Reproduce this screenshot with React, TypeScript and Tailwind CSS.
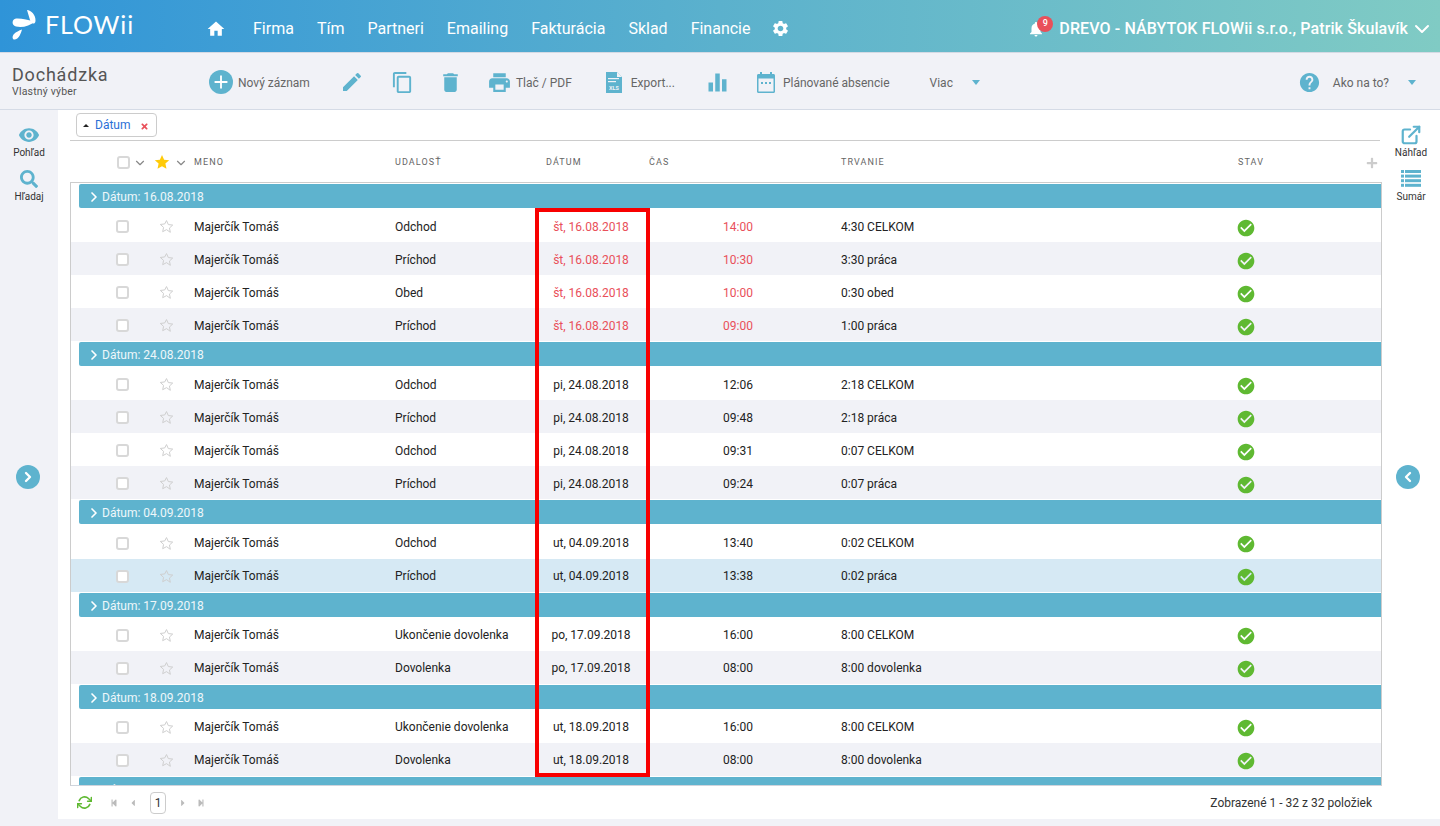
import React from "react";
import { FaStepBackward, FaStepForward, FaCaretLeft, FaCaretRight, FaSearch, FaPlus, FaTimes } from "react-icons/fa";
import {
  MdHome, MdSettings, MdNotifications, MdEdit, MdContentCopy, MdDelete, MdPrint,
  MdEqualizer, MdHelp, MdVisibility, MdCheckCircle, MdAdd,
} from "react-icons/md";
import { FiChevronDown, FiChevronLeft, FiChevronRight, FiExternalLink, FiRefreshCw } from "react-icons/fi";

type Row = { event: string; date: string; time: string; dur: string };
type Group = { title: string; red?: boolean; rows: Row[] };

const groups: Group[] = [
  {
    title: "16.08.2018",
    red: true,
    rows: [
      { event: "Odchod", date: "št, 16.08.2018", time: "14:00", dur: "4:30 CELKOM" },
      { event: "Príchod", date: "št, 16.08.2018", time: "10:30", dur: "3:30 práca" },
      { event: "Obed", date: "št, 16.08.2018", time: "10:00", dur: "0:30 obed" },
      { event: "Príchod", date: "št, 16.08.2018", time: "09:00", dur: "1:00 práca" },
    ],
  },
  {
    title: "24.08.2018",
    rows: [
      { event: "Odchod", date: "pi, 24.08.2018", time: "12:06", dur: "2:18 CELKOM" },
      { event: "Príchod", date: "pi, 24.08.2018", time: "09:48", dur: "2:18 práca" },
      { event: "Odchod", date: "pi, 24.08.2018", time: "09:31", dur: "0:07 CELKOM" },
      { event: "Príchod", date: "pi, 24.08.2018", time: "09:24", dur: "0:07 práca" },
    ],
  },
  {
    title: "04.09.2018",
    rows: [
      { event: "Odchod", date: "ut, 04.09.2018", time: "13:40", dur: "0:02 CELKOM" },
      { event: "Príchod", date: "ut, 04.09.2018", time: "13:38", dur: "0:02 práca" },
    ],
  },
  {
    title: "17.09.2018",
    rows: [
      { event: "Ukončenie dovolenka", date: "po, 17.09.2018", time: "16:00", dur: "8:00 CELKOM" },
      { event: "Dovolenka", date: "po, 17.09.2018", time: "08:00", dur: "8:00 dovolenka" },
    ],
  },
  {
    title: "18.09.2018",
    rows: [
      { event: "Ukončenie dovolenka", date: "ut, 18.09.2018", time: "16:00", dur: "8:00 CELKOM" },
      { event: "Dovolenka", date: "ut, 18.09.2018", time: "08:00", dur: "8:00 dovolenka" },
    ],
  },
  { title: "19.09.2018", rows: [] },
];

const nav = ["Firma", "Tím", "Partneri", "Emailing", "Fakturácia", "Sklad", "Financie"];

function Logo() {
  return (
    <div className="-mt-[5px] flex w-[206px] shrink-0 items-center">
      <svg width="36" height="52" viewBox="0 0 36 52" className="text-white">
        <g fill="currentColor">
          <path d="M27 10C31 10 36 15 35.5 21C35 25 31 24 30 20C29 17 28 13 27 10Z" />
          <path d="M35 21.5C30 26 22 28 16 26.5C11 25 12 19 16 18.500C21 18 28 20 35 21.500Z" />
          <path d="M22 29.500C21 33 19 39 15 39.500C12 40 12 36 14 34C16 32 19 30.500 22 29.500Z" />
        </g>
      </svg>
      <span className="-mt-[3px] ml-[9px] font-['Lato',sans-serif] text-[25px] font-normal leading-none tracking-[0.9px] text-white">FLOWii</span>
    </div>
  );
}

function Header() {
  return (
    <header className="flex h-[53px] shrink-0 items-center border-b border-[#d5dae4] bg-gradient-to-r from-[#2f94d8] via-[#5bb1cd] to-[#80cbc4] pr-[6px] pt-[5px] text-white">
      <Logo />
      <MdHome className="text-[20px]" />
      <nav className="ml-[27px] flex gap-[23px] text-[16px]">
        {nav.map((n) => (
          <span key={n}>{n}</span>
        ))}
      </nav>
      <MdSettings className="ml-[21px] text-[19px]" />
      <div className="relative ml-auto">
        <MdNotifications className="text-[18px]" />
        <span className="absolute -right-[8px] -top-[4px] flex h-[16px] w-[16px] items-center justify-center rounded-full bg-[#e9505a] text-[9px] font-medium">9</span>
      </div>
      <span className="ml-[14px] text-[16px] font-medium tracking-[0.11px]">DREVO - NÁBYTOK FLOWii s.r.o., Patrik Škulavík</span>
      <FiChevronDown className="ml-[2px] text-[24px]" strokeWidth={2} />
    </header>
  );
}

function Caret() {
  return <span className="block h-0 w-0 border-x-[4px] border-t-[5px] border-x-transparent border-t-[#5eb3ce]" />;
}

function XlsIcon() {
  return (
    <svg width="16" height="21" viewBox="0 0 16 21" className="block">
      <path d="M0 0H11L16 5V21H0Z" fill="#5eb3ce" />
      <path d="M11 0L16 5H11Z" fill="#f1f2f7" />
      <rect x="2" y="6" width="11" height="1.2" fill="#f1f2f7" />
      <rect x="2" y="9" width="8" height="1.2" fill="#f1f2f7" />
      <text x="8" y="18" textAnchor="middle" fontSize="5.5" fontWeight="700" fill="#f1f2f7" fontFamily="Roboto, sans-serif">XLS</text>
    </svg>
  );
}

function CalendarIcon() {
  return (
    <svg width="18" height="21" viewBox="0 0 18 21" fill="#5eb3ce" className="block">
      <path d="M3 0H5V2H13V0H15V2H16.500C17.400 2 18 2.600 18 3.500V19.500C18 20.400 17.400 21 16.500 21H1.500C.6 21 0 20.400 0 19.500V3.500C0 2.600.6 2 1.500 2H3Z" />
      <rect x="1.5" y="6.5" width="15" height="13" fill="#f1f2f7" />
      <rect x="4" y="10" width="2" height="2" />
      <rect x="8" y="10" width="2" height="2" />
      <rect x="12" y="10" width="2" height="2" />
    </svg>
  );
}

function ListIcon() {
  return (
    <svg width="20" height="17" viewBox="0 0 20 17" fill="#5eb3ce" className="block">
      <rect x="0" y="0" width="3" height="3" />
      <rect x="4" y="0" width="16" height="3" />
      <rect x="0" y="4.600" width="3" height="3" />
      <rect x="4" y="4.600" width="16" height="3" />
      <rect x="0" y="9.200" width="3" height="3" />
      <rect x="4" y="9.200" width="16" height="3" />
      <rect x="0" y="13.800" width="3" height="3" />
      <rect x="4" y="13.800" width="16" height="3" />
    </svg>
  );
}

function Toolbar() {
  const label = "pt-[2px] text-[12px] text-[#666]";
  return (
    <div className="flex h-[57px] shrink-0 items-center border-b border-[#d5dbe6] pl-[12px] pr-[24px] pt-[2px]">
      <div className="-mt-[2px] w-[197px]">
        <div className="text-[18px] leading-[20px] tracking-[0.8px] text-[#555]">Dochádzka</div>
        <div className="text-[10.500px] leading-[13px] tracking-[0.2px] text-[#555]">Vlastný výber</div>
      </div>
      <span className="flex h-[24px] w-[24px] items-center justify-center rounded-full bg-[#5eb3ce] text-white">
        <MdAdd className="text-[22px]" />
      </span>
      <span className={`ml-[5px] ${label}`}>Nový záznam</span>
      <MdEdit className="ml-[30px] text-[24px] text-[#5eb3ce]" />
      <MdContentCopy className="ml-[27px] text-[23px] text-[#5eb3ce]" />
      <MdDelete className="ml-[24px] text-[25px] text-[#5eb3ce]" />
      <MdPrint className="ml-[24px] text-[25px] text-[#5eb3ce]" />
      <span className={`ml-[4px] ${label}`}>Tlač / PDF</span>
      <span className="ml-[34px]"><XlsIcon /></span>
      <span className={`ml-[9px] ${label}`}>Export...</span>
      <MdEqualizer className="ml-[29px] text-[27px] text-[#5eb3ce]" />
      <span className="ml-[26px]"><CalendarIcon /></span>
      <span className={`ml-[8px] ${label}`}>Plánované absencie</span>
      <span className={`ml-[40px] ${label}`}>Viac</span>
      <span className="ml-[19px]"><Caret /></span>
      <MdHelp className="ml-auto text-[23px] text-[#5eb3ce]" />
      <span className={`ml-[12px] ${label}`}>Ako na to?</span>
      <span className="ml-[19px]"><Caret /></span>
    </div>
  );
}

function SideBtn({ icon, label }: { icon: React.ReactNode; label: string }) {
  return (
    <div className="flex flex-col items-center text-[10px] leading-[12px] text-[#333]">
      <span className="flex h-[25px] items-center justify-center text-[#5eb3ce]">{icon}</span>
      <span>{label}</span>
    </div>
  );
}

function RoundArrow({ left }: { left?: boolean }) {
  return (
    <span className="flex h-[24px] w-[24px] items-center justify-center rounded-full bg-[#5eb3ce] text-white">
      {left ? <FiChevronLeft className="text-[16px]" strokeWidth={3.5} /> : <FiChevronRight className="text-[16px]" strokeWidth={3.5} />}
    </span>
  );
}

function Checkbox() {
  return <span className="block h-[13px] w-[13px] rounded-[3px] border-2 border-[#d8d8d8] bg-white" />;
}

function Star() {
  return (
    <svg width="15" height="15" viewBox="0 0 24 24" fill="none" stroke="#cfcfcf" strokeWidth="1.6" strokeLinejoin="round" className="block">
      <path d="M12 2.500l2.900 6.400 7 .8-5.200 4.700 1.400 6.900L12 17l-6.100 3.300 1.400-6.900-5.200-4.700 7-.8z" />
    </svg>
  );
}

const rowGrid = "grid grid-cols-[123px_201px_141px_110px_195px_397px_1fr] items-center";

function DataRow({ row, even, red, selected }: { row: Row; even: boolean; red?: boolean; selected?: boolean }) {
  const bg = selected ? "bg-[#d6e9f4]" : even ? "bg-[#f1f2f7]" : "bg-white";
  const dateColor = red ? "text-[#e9505a]" : "text-[#222]";
  return (
    <div className={`${rowGrid} h-[33px] pt-[2px] text-[12px] text-[#222] ${bg}`}>
      <div className="flex items-center pl-[45px]">
        <Checkbox />
        <span className="ml-[30px]"><Star /></span>
      </div>
      <span>Majerčík Tomáš</span>
      <span>{row.event}</span>
      <span className={`text-center ${dateColor}`}>{row.date}</span>
      <span className={`pl-[77px] ${dateColor}`}>{row.time}</span>
      <span>{row.dur}</span>
      <MdCheckCircle className="-ml-[2px] mt-[2px] text-[20px] text-[#5fb932]" />
    </div>
  );
}

function Grid() {
  return (
    <div className="relative h-[604px] overflow-hidden border border-[#ccc] border-b-[#cfd4dc] bg-white">
      {groups.map((g) => (
        <div key={g.title}>
          <div className="my-[1.1px] ml-[8px] flex h-[24px] items-center rounded-l-[2px] bg-[#5eb3ce] pl-[7px] pt-[2px] text-[12px] text-white/90">
            <FiChevronRight className="text-[16px] text-white" strokeWidth={2.5} />
            Dátum: {g.title}
          </div>
          {g.rows.map((r, i) => (
            <DataRow key={r.time + i} row={r} even={i % 2 === 1} red={g.red} selected={g.title === "04.09.2018" && i === 1} />
          ))}
        </div>
      ))}
      <div className="absolute left-[464px] top-[25px] h-[569px] w-[115px] border-4 border-[#f80000]" />
    </div>
  );
}

function Main() {
  const head = "text-[9px] uppercase tracking-[1.1px] text-[#666]";
  return (
    <div className="flex min-w-0 flex-1 flex-col bg-white pl-[12px]">
      <div className="mr-[2px] h-[31px] border-b border-[#ccc] pl-[6px] pt-[3px]">
        <div className="flex h-[24px] w-[81px] items-center rounded-[4px] border border-[#ccc] pl-[6px] text-[12px] text-[#2a6fd6]">
          <span className="mr-[6px] h-0 w-0 border-x-[3px] border-b-[3px] border-x-transparent border-b-[#222]" />
          <span>Dátum</span>
          <FaTimes className="ml-[10px] mt-[2px] text-[9px] text-[#e9505a]" />
        </div>
      </div>
      <div className="flex h-[41px] items-center pl-[47px] pt-[2px]">
        <Checkbox />
        <FiChevronDown className="ml-[3px] text-[14px] text-[#888]" />
        <svg width="16" height="16" viewBox="0 0 24 24" fill="#ffcb0a" className="-mt-[2px] ml-[7px]">
          <path d="M12 1.500l3.200 7 7.600.8-5.700 5.100 1.600 7.600L12 18.200 5.300 22l1.600-7.600L1.200 9.300l7.600-.8z" />
        </svg>
        <FiChevronDown className="ml-[4px] text-[14px] text-[#888]" />
        <span className={`ml-[6px] w-[201px] ${head}`}>Meno</span>
        <span className={`w-[151px] ${head}`}>Udalosť</span>
        <span className={`w-[103px] ${head}`}>Dátum</span>
        <span className={`w-[192px] ${head}`}>Čas</span>
        <span className={`w-[397px] ${head}`}>Trvanie</span>
        <span className={head}>Stav</span>
        <FaPlus className="ml-auto mr-[4px] text-[12px] text-[#ccc]" />
      </div>
      <Grid />
      <div className="flex flex-1 items-center pl-[7px] pr-[10px] text-[12px] text-[#333]">
        <FiRefreshCw className="text-[15px] text-[#5fb932]" strokeWidth={2.5} />
        <div className="ml-[18px] flex items-center text-[8px] text-[#bbb]">
          <FaStepBackward />
          <FaCaretLeft className="ml-[10px] text-[10px]" />
          <span className="ml-[12px] flex h-[22px] w-[16px] items-center justify-center rounded-[4px] border border-[#ccc] text-[12px] text-[#333]">1</span>
          <FaCaretRight className="ml-[12px] text-[10px]" />
          <FaStepForward className="ml-[9px]" />
        </div>
        <span className="ml-auto">Zobrazené 1 - 32 z 32 položiek</span>
      </div>
    </div>
  );
}

export default function App() {
  return (
    <div className="flex h-[826px] w-[1440px] flex-col overflow-hidden bg-[#f1f2f7] font-['Roboto',sans-serif]">
      <Header />
      <Toolbar />
      <div className="flex h-[709px] shrink-0">
        <aside className="relative flex w-[58px] shrink-0 flex-col items-center gap-[7px] pt-[12px]">
          <SideBtn icon={<MdVisibility className="text-[22px]" />} label="Pohľad" />
          <SideBtn icon={<FaSearch className="text-[18px]" />} label="Hľadaj" />
          <span className="absolute left-[16px] top-[355px]"><RoundArrow /></span>
        </aside>
        <Main />
        <aside className="relative flex w-[58px] shrink-0 flex-col items-center gap-[7px] bg-white pt-[12px]">
          <SideBtn icon={<FiExternalLink className="text-[22px]" strokeWidth={2.4} />} label="Náhľad" />
          <SideBtn icon={<ListIcon />} label="Sumár" />
          <span className="absolute left-[14px] top-[355px]"><RoundArrow left /></span>
        </aside>
      </div>
    </div>
  );
}
